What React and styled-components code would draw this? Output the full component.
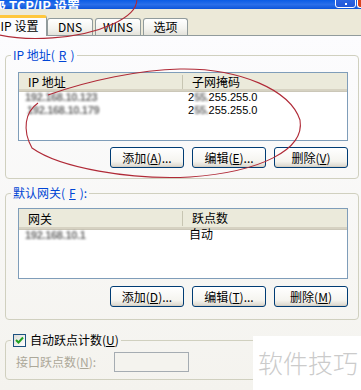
import React from 'react';
import styled, { createGlobalStyle } from 'styled-components';

const Global = createGlobalStyle`
  html, body { margin: 0; padding: 0; background: #ECE9D8; }
  body { font-family: "Noto Sans CJK SC", "DejaVu Sans", sans-serif; font-size: 12px; }
  * { box-sizing: border-box; }
`;

const Window = styled.div`
  position: relative;
  width: 361px;
  height: 390px;
  overflow: hidden;
  background: #ECE9D8;
  display: flex;
  flex-direction: column;
  font-family: "Noto Sans CJK SC", "DejaVu Sans", sans-serif;
  font-size: 12px;
  color: #000;
`;

const TitleBar = styled.div`
  flex: none;
  height: 9px;
  background: linear-gradient(#0A5CE6, #2A6FEA 50%, #0D55DA);
  display: flex;
  align-items: flex-end;
  justify-content: space-between;
  overflow: hidden;
`;

const TitleText = styled.div`
  color: #fff;
  font-weight: bold;
  font-size: 13px;
  line-height: 13px;
  margin-left: -7px;
  margin-bottom: -3px;
  white-space: pre;
`;

const TitleButtons = styled.div`
  display: flex;
  align-items: flex-end;
  gap: 1px;
`;

const HelpButton = styled.div`
  width: 21px;
  height: 21px;
  margin-bottom: 1px;
  border: 1px solid #fff;
  border-radius: 3px;
  background: linear-gradient(#3C7CF0, #2257D8);
  display: flex;
  align-items: flex-end;
  justify-content: center;
  padding-bottom: 2px;
  &::after {
    content: '';
    width: 2px;
    height: 2px;
    background: #fff;
  }
`;

const CloseButton = styled.div`
  width: 4px;
  height: 21px;
  margin-bottom: 1px;
  border: 1px solid #fff;
  border-right: none;
  border-radius: 3px 0 0 3px;
  background: #D9431F;
`;

const TabStrip = styled.div`
  flex: none;
  height: 26px;
  display: flex;
  align-items: flex-end;
  position: relative;
  z-index: 2;
`;

const Tab = styled.div`
  flex: none;
  width: ${p => p.$w}px;
  height: ${p => (p.$active ? 21 : 17)}px;
  margin-left: ${p => p.$ml || 0}px;
  margin-bottom: ${p => (p.$active ? -1 : 0)}px;
  border: 1px solid #919B9C;
  border-bottom: none;
  border-top: ${p => (p.$active ? '3px solid #FFC73C' : '1px solid #919B9C')};
  border-radius: 3px 3px 0 0;
  background: ${p => (p.$active ? '#FCFCFE' : 'linear-gradient(#FFFFFF, #F3F3EF 60%, #E3E2DA)')};
  display: flex;
  align-items: center;
  justify-content: center;
  line-height: 14px;
  padding-bottom: ${p => (p.$active ? 2 : 0)}px;
  white-space: pre;
`;

const TabPage = styled.div`
  flex: 1;
  border-top: 1px solid #919B9C;
  background: linear-gradient(#FCFCFE, #F4F3EE);
  padding: 12px 2px 0 5px;
  display: flex;
  flex-direction: column;
`;

const Group = styled.fieldset`
  margin: 0 0 ${p => p.$mb || 0}px 0;
  min-width: 0;
  border: 1px solid #D0D0BF;
  border-radius: 4px;
  padding: 0 10px ${p => p.$pb}px ${p => p.$pl || 12}px;
`;

const Legend = styled.legend`
  margin-left: -7px;
  padding: 0 2px;
  height: 14px;
  line-height: 14px;
  color: ${p => p.$color || '#0046D5'};
  display: flex;
  align-items: center;
  gap: 4px;
  white-space: pre;
`;

const ListBox = styled.div`
  margin-top: ${p => p.$mt}px;
  height: ${p => p.$h}px;
  border: 1px solid #7F9DB9;
  background: #fff;
  display: flex;
  flex-direction: column;
`;

const HeaderRow = styled.div`
  display: grid;
  grid-template-columns: 164px 1fr;
  height: ${p => p.$h}px;
  background: #EBEADB;
  border-bottom: 2px solid #D6D2C2;
  box-shadow: 0 1px 0 #CBC7B8;
`;

const HeaderCell = styled.div`
  display: flex;
  align-items: center;
  padding-left: 9px;
  line-height: 14px;
  border-right: ${p => (p.$sep ? '1px solid #C7C5B2' : 'none')};
  margin: ${p => (p.$sep ? '2px 0 1px' : '0')};
`;

const Row = styled.div`
  display: grid;
  grid-template-columns: 164px 1fr;
  height: 13px;
  line-height: 13px;
  font-family: "Liberation Sans", "Noto Sans CJK SC", sans-serif;
  font-size: 11px;
  &:first-of-type { margin-top: 1px; }
`;

const Cell = styled.div`
  padding-left: ${p => p.$pl}px;
  font-size: ${p => p.$fs || 11}px;
  white-space: pre;
`;

const Blur = styled.span`
  color: #6f6f6f;
  filter: blur(1.1px);
  font-weight: bold;
  letter-spacing: -0.3px;
`;

const ButtonRow = styled.div`
  margin-top: ${p => p.$mt}px;
  display: flex;
  justify-content: flex-end;
  gap: 8px;
`;

const Button = styled.div`
  width: 74px;
  height: 21px;
  border: 1px solid #003C74;
  border-radius: 3px;
  background: linear-gradient(#FFFFFF, #F5F4EF 70%, #D9D5CB);
  box-shadow: inset 0 -1px 0 #D6D0C5;
  display: flex;
  align-items: center;
  justify-content: center;
  line-height: 14px;
  white-space: pre;
`;

const Check = styled.div`
  width: 13px;
  height: 13px;
  border: 1px solid #1C5180;
  background: linear-gradient(135deg, #DCDCD7, #FFFFFF);
  display: flex;
  align-items: center;
  justify-content: center;
`;

const FieldRow = styled.div`
  margin-top: 5px;
  margin-left: -2px;
  display: flex;
  align-items: center;
`;

const DisabledLabel = styled.div`
  width: 98px;
  color: #ACA899;
  line-height: 14px;
  white-space: pre;
`;

const DisabledInput = styled.div`
  width: 75px;
  height: 20px;
  border: 1px solid #A5ACB2;
  background: #F4F3EE;
`;

const Watermark = styled.div`
  position: absolute;
  right: 0;
  bottom: 0;
  width: 108px;
  height: 54px;
  background: #fff;
  display: flex;
  align-items: center;
  justify-content: center;
  padding-left: 2px;
  padding-bottom: 2px;
  font-size: 25px;
  line-height: 26px;
  font-weight: 300;
  color: #CBCBCB;
`;

const Annotation = styled.svg`
  position: absolute;
  left: 0;
  top: 0;
  width: 361px;
  height: 390px;
  pointer-events: none;
  z-index: 5;
`;

const M = ({ children }) => <u>{children}</u>;

export default function App() {
  return (
    <>
      <Global />
      <Window>
        <TitleBar>
          <TitleText>级 TCP/IP 设置</TitleText>
          <TitleButtons>
            <HelpButton />
            <CloseButton />
          </TitleButtons>
        </TitleBar>
        <TabStrip>
          <Tab $active $w={55} $ml={-8}>IP 设置</Tab>
          <Tab $w={46}>DNS</Tab>
          <Tab $w={46} $ml={2}>WINS</Tab>
          <Tab $w={45} $ml={2}>选项</Tab>
        </TabStrip>
        <TabPage>
          <Group $mb={7} $pb={10}>
            <Legend>IP 地址(<M>R</M>)</Legend>
            <ListBox $mt={10} $h={69}>
              <HeaderRow $h={18}>
                <HeaderCell $sep>IP 地址</HeaderCell>
                <HeaderCell>子网掩码</HeaderCell>
              </HeaderRow>
              <Row>
                <Cell $pl={6}><Blur>192.168.10.123</Blur></Cell>
                <Cell $pl={5}>2<Blur>55.</Blur>255.255.0</Cell>
              </Row>
              <Row>
                <Cell $pl={8}><Blur>192.168.10.179</Blur></Cell>
                <Cell $pl={5}>2<Blur>55.</Blur>255.255.0</Cell>
              </Row>
            </ListBox>
            <ButtonRow $mt={6}>
              <Button>添加(<M>A</M>)...</Button>
              <Button>编辑(<M>E</M>)...</Button>
              <Button>删除(<M>V</M>)</Button>
            </ButtonRow>
          </Group>
          <Group $mb={13} $pb={12}>
            <Legend>默认网关(<M>F</M>):</Legend>
            <ListBox $mt={8} $h={71}>
              <HeaderRow $h={20}>
                <HeaderCell $sep>网关</HeaderCell>
                <HeaderCell>跃点数</HeaderCell>
              </HeaderRow>
              <Row>
                <Cell $pl={6}><Blur>192.168.10.1</Blur></Cell>
                <Cell $pl={6} $fs={12}>自动</Cell>
              </Row>
            </ListBox>
            <ButtonRow $mt={7}>
              <Button>添加(<M>D</M>)...</Button>
              <Button>编辑(<M>T</M>)...</Button>
              <Button>删除(<M>M</M>)</Button>
            </ButtonRow>
          </Group>
          <Group $pb={7} $pl={12}>
            <Legend $color="#000">
              <Check>
                <svg width="9" height="9" viewBox="0 0 9 9">
                  <path d="M1 4 L3.5 6.5 L8 1.5" stroke="#21A121" strokeWidth="2" fill="none" />
                </svg>
              </Check>
              <span>自动跃点计数(<M>U</M>)</span>
            </Legend>
            <FieldRow>
              <DisabledLabel>接口跃点数(<M>N</M>):</DisabledLabel>
              <DisabledInput />
            </FieldRow>
          </Group>
        </TabPage>
        <Watermark>软件技巧</Watermark>
        <Annotation viewBox="0 0 361 390">
          <ellipse cx="50" cy="5" rx="87" ry="33" transform="rotate(-4 50 5)" fill="none" stroke="#B02A37" strokeWidth="1.1" />
          <path
            d="M 48 95 C 90 80, 140 70, 180 69 C 240 68, 290 90, 300 120 C 305 150, 260 172, 190 177 C 130 180, 60 168, 32 148 C 22 130, 25 112, 38 103"
            fill="none"
            stroke="#B02A37"
            strokeWidth="1.1"
          />
        </Annotation>
      </Window>
    </>
  );
}
